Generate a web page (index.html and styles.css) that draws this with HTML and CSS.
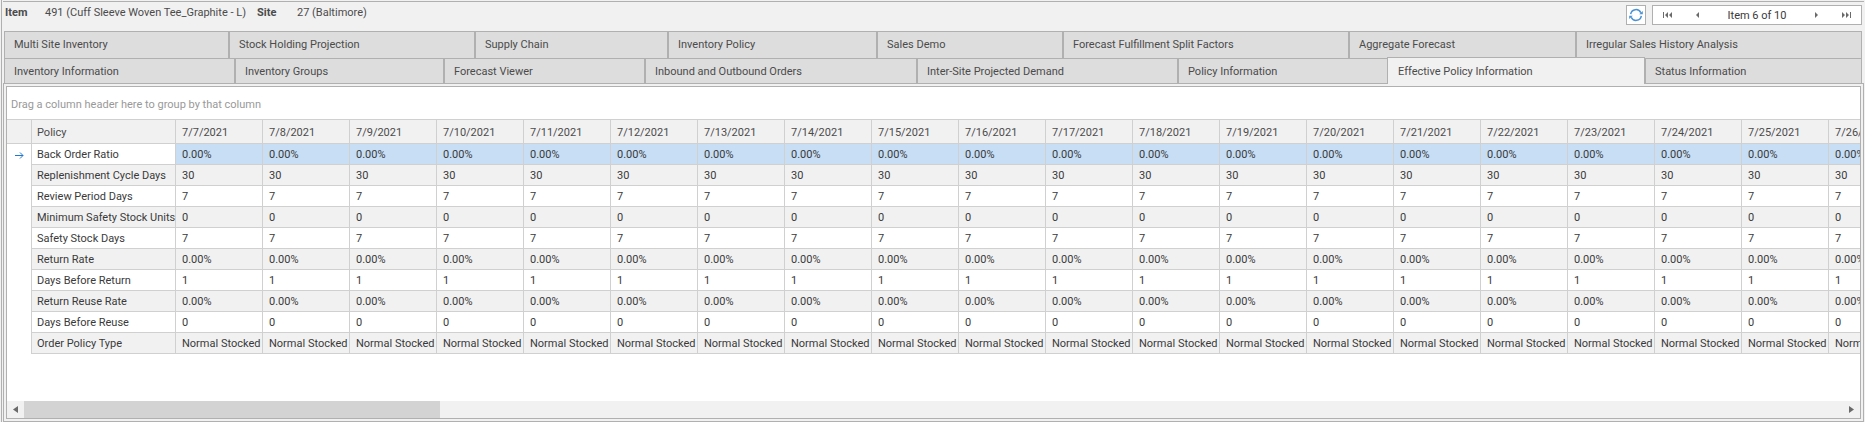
FILE: index.html
```html
<!DOCTYPE html>
<html lang="en">
<head>
<meta charset="utf-8">
<title>Effective Policy Information</title>
<link rel="stylesheet" href="styles.css">
</head>
<body>
<main class="window">
  <header class="topbar">
    <dl class="context">
      <dt>Item</dt><dd>491 (Cuff Sleeve Woven Tee_Graphite - L)</dd>
      <dt>Site</dt><dd class="site">27 (Baltimore)</dd>
    </dl>
    <button class="refresh" type="button" aria-label="Refresh">
      <svg width="14" height="14" viewBox="0 0 14 14"><g fill="none" stroke="#4a92d4" stroke-width="1.5"><path d="M1.700 6.200A5.300 5.300 0 0 1 11.800 4.800"/><path d="M12.300 7.800A5.300 5.300 0 0 1 2.200 9.200"/></g><path d="M10.200 6.300h3.600V3zM3.800 7.700H.2V11z" fill="#4a92d4"/></svg>
    </button>
    <nav class="pager" aria-label="Items">
      <button type="button" aria-label="First"><svg width="10" height="6" viewBox="0 0 10 6"><path d="M0 0h1v6H0zM5 0v6L2 3zM9 0v6L6 3z"/></svg></button>
      <button type="button" aria-label="Previous"><svg width="10" height="6" viewBox="0 0 10 6"><path d="M6 0v6L3 3z"/></svg></button>
      <span class="position">Item 6 of 10</span>
      <button type="button" aria-label="Next"><svg width="10" height="6" viewBox="0 0 10 6"><path d="M4 0v6l3-3z"/></svg></button>
      <button type="button" aria-label="Last"><svg width="10" height="6" viewBox="0 0 10 6"><path d="M9 0h1v6H9zM1 0v6l3-3zM5 0v6l3-3z"/></svg></button>
    </nav>
  </header>
  <div class="tabs" role="tablist">
    <div class="tabrow upper">
      <button type="button" role="tab">Multi Site Inventory</button>
      <button type="button" role="tab">Stock Holding Projection</button>
      <button type="button" role="tab">Supply Chain</button>
      <button type="button" role="tab">Inventory Policy</button>
      <button type="button" role="tab">Sales Demo</button>
      <button type="button" role="tab">Forecast Fulfillment Split Factors</button>
      <button type="button" role="tab">Aggregate Forecast</button>
      <button type="button" role="tab">Irregular Sales History Analysis</button>
    </div>
    <div class="tabrow lower">
      <button type="button" role="tab">Inventory Information</button>
      <button type="button" role="tab">Inventory Groups</button>
      <button type="button" role="tab">Forecast Viewer</button>
      <button type="button" role="tab">Inbound and Outbound Orders</button>
      <button type="button" role="tab">Inter-Site Projected Demand</button>
      <button type="button" role="tab">Policy Information</button>
      <button type="button" role="tab" class="selected" aria-selected="true">Effective Policy Information</button>
      <button type="button" role="tab">Status Information</button>
    </div>
  </div>
  <section class="panel">
    <div class="grid">
      <div class="groupbox">Drag a column header here to group by that column</div>
      <div class="viewport">
        <table>
          <thead><tr id="head"><th class="mark"></th><th class="policy">Policy</th></tr></thead>
          <tbody id="body"></tbody>
        </table>
      </div>
      <div class="scrollbar">
        <button type="button" aria-label="Scroll left"><svg width="5" height="7" viewBox="0 0 5 7"><path d="M5 0v7L0 3.500z"/></svg></button>
        <div class="track"><div class="thumb"></div></div>
        <button type="button" aria-label="Scroll right"><svg width="5" height="7" viewBox="0 0 5 7"><path d="M0 0v7l5-3.500z"/></svg></button>
      </div>
    </div>
  </section>
</main>
<script src="grid.js"></script>
</body>
</html>
```
FILE: styles.css
```css
* { box-sizing: border-box; }
body {
  margin: 0;
  background: #f1f1f1;
  color: #4b4b4b;
  font: 11px/14px Tahoma, Roboto, sans-serif;
}
button { font: inherit; color: inherit; margin: 0; padding: 0; }
.window {
  display: flex;
  flex-direction: column;
  height: 100vh;
  margin-left: 1px;
  border-left: 1px solid #b0b0b0;
  padding: 1px 1px 0 1px;
}
.topbar {
  display: flex;
  align-items: flex-start;
  height: 30px;
  padding: 3px 2px 0 2px;
  border-top: 1px solid #b0b0b0;
}
.context { display: flex; flex: 1; margin: 0; padding-top: 1px; }
.context dt { width: 40px; font-weight: bold; }
.context dd { width: 212px; margin: 0; }
.context .site { width: auto; }
.refresh {
  display: grid;
  place-items: center;
  width: 20px;
  height: 20px;
  margin-right: 6px;
  border: 1px solid #b0b0b0;
  background: #fff;
}
.pager {
  display: flex;
  width: 210px;
  height: 20px;
  border: 1px solid #b0b0b0;
  background: #fff;
}
.pager button {
  display: grid;
  place-items: center;
  width: 30px;
  border: 0;
  background: none;
}
.pager svg, .scrollbar svg { fill: #6a6a6a; }
.position { flex: 1; padding-top: 1px; text-align: center; line-height: 18px; color: #3a3a3a; }
.tabs { margin: 0 2px 0 1px; }
.tabrow { display: grid; }
.upper { grid-template-columns: 225fr 246fr 193fr 209fr 186fr 286fr 227fr 286fr; height: 27px; }
.lower { grid-template-columns: 231fr 209fr 201fr 272fr 261fr 210fr 257fr 217fr; height: 25px; }
.tabrow button {
  border: 1px solid #b0b0b0;
  border-bottom: 0;
  background: #ddd;
  padding: 0 9px;
  text-align: left;
}
.lower button { padding-top: 2px; }
.tabrow .selected {
  margin: -1px 0 -1px -1px;
  padding-left: 10px;
  background: #f1f1f1;
  z-index: 1;
}
.panel {
  flex: 1;
  display: flex;
  min-height: 0;
  padding: 2px;
  border: 1px solid #b0b0b0;
}
.grid {
  flex: 1;
  min-width: 0;
  display: flex;
  flex-direction: column;
  border: 1px solid #b0b0b0;
  background: #fff;
}
.groupbox { height: 32px; padding: 11px 4px 0; color: #999; }
.viewport { flex: 1; overflow: hidden; min-height: 0; }
table { border-collapse: separate; border-spacing: 0; table-layout: fixed; width: 0; }
th, td {
  width: 87px;
  height: 21px;
  padding: 2px 5px 0 6px;
  border-right: 1px solid #d0d0d0;
  border-bottom: 1px solid #d0d0d0;
  text-align: left;
  font-weight: normal;
  white-space: nowrap;
}
th { height: 25px; border-top: 1px solid #d0d0d0; background: #f1f1f1; }
td { color: #3a3a3a; }
.mark { width: 25px; padding: 2px 0 0; }
td.mark { border-bottom: 0; text-align: center; background: #fff; }
.mark svg { display: block; margin: 0 auto; }
.policy { width: 144px; padding: 2px 0 0 5px; }
tbody tr:nth-child(even) td:not(.mark) { background: #f1f1f1; }
tbody tr.current .value { background: #c7def5; }
.scrollbar { display: flex; height: 17px; background: #f1f1f1; }
.scrollbar button { display: grid; place-items: center; width: 17px; border: 0; background: none; }
.track { flex: 1; }
.thumb { width: 22.85%; height: 100%; background: #d3d3d3; }
```
FILE: grid.js
```js
const rows = [
  ["Back Order Ratio", "0.00%"],
  ["Replenishment Cycle Days", "30"],
  ["Review Period Days", "7"],
  ["Minimum Safety Stock Units", "0"],
  ["Safety Stock Days", "7"],
  ["Return Rate", "0.00%"],
  ["Days Before Return", "1"],
  ["Return Reuse Rate", "0.00%"],
  ["Days Before Reuse", "0"],
  ["Order Policy Type", "Normal Stocked"]
];
const days = Array.from({ length: 20 }, (_, i) => i + 7);
const arrow = '<svg width="9" height="7" viewBox="0 0 9 7" fill="none" stroke="#1e78d2"><path d="M0 3.500h8M5 .5l3 3-3 3"/></svg>';

document.getElementById("head").insertAdjacentHTML("beforeend",
  days.map(d => `<th>7/${d}/2021</th>`).join(""));
document.getElementById("body").innerHTML = rows.map(([name, value], i) =>
  `<tr class="${i ? "" : "current"}"><td class="mark">${i ? "" : arrow}</td><td class="policy">${name}</td>` +
  days.map(() => `<td class="value">${value}</td>`).join("") + "</tr>").join("");
```
